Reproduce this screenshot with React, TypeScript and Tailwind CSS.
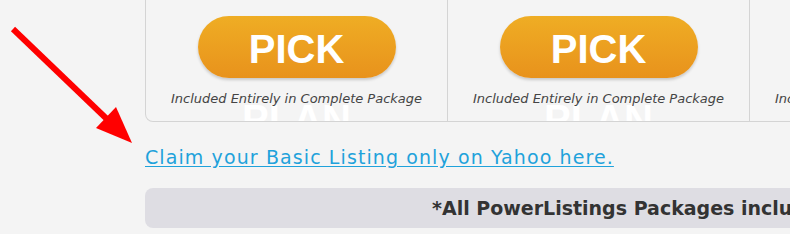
import React from 'react'

const plans = [
  { id: 1, note: 'Included Entirely in Complete Package' },
  { id: 2, note: 'Included Entirely in Complete Package' },
  { id: 3, note: 'Included Entirely in Complete Package' },
]

const PointerArrow = () => (
  <svg className="absolute left-0 top-0" width="140" height="150" viewBox="0 0 140 150">
    <line x1="13" y1="29" x2="110" y2="122" stroke="#ff0000" strokeWidth="6" strokeLinecap="butt" />
    <polygon points="132,143 96,128 116,107" fill="#ff0000" />
  </svg>
)

const PlanColumn = ({ note }: { note: string }) => (
  <div className="relative flex w-[302px] shrink-0 flex-col items-center overflow-hidden border-r border-[#d4d4d4] pt-[16px]">
    <span className="absolute left-0 right-0 top-[99px] text-center text-[40px] font-bold leading-[40px] text-white">
      PLAN
    </span>
    <button className="relative flex h-[62px] w-[198px] items-center justify-center rounded-full bg-gradient-to-b from-[#efad24] to-[#e8921c] pt-1 text-[40px] font-bold leading-[40px] text-white shadow-[0_2px_3px_rgba(0,0,0,0.18)]">
      PICK
    </button>
    <p className="relative mt-[13px] font-['DejaVu_Sans',sans-serif] text-[13px] italic leading-[16px] text-[#444]">
      {note}
    </p>
  </div>
)

export default function App() {
  return (
    <div className="relative h-[234px] w-[790px] overflow-hidden bg-[#f4f4f4] font-['Liberation_Sans',Arial,sans-serif]">
      <PointerArrow />
      <div className="ml-[145px] flex w-[1200px] flex-col">
        <div className="flex h-[122px] rounded-b-[8px] border border-t-0 border-[#d4d4d4]">
          {plans.map((plan) => (
            <PlanColumn key={plan.id} note={plan.note} />
          ))}
        </div>
        <a
          href="#"
          className="mt-[23px] self-start font-['DejaVu_Sans',sans-serif] text-[19px] leading-[24px] tracking-[1.1px] text-[#1fa2db] underline underline-offset-2"
        >
          Claim your Basic Listing only on Yahoo here.
        </a>
        <div className="mt-[19px] flex h-[40px] items-center rounded-[8px] bg-[#dedde3] pl-[287px] font-['DejaVu_Sans',sans-serif] text-[19px] font-bold text-[#333]">
          *All PowerListings Packages include
        </div>
      </div>
    </div>
  )
}
